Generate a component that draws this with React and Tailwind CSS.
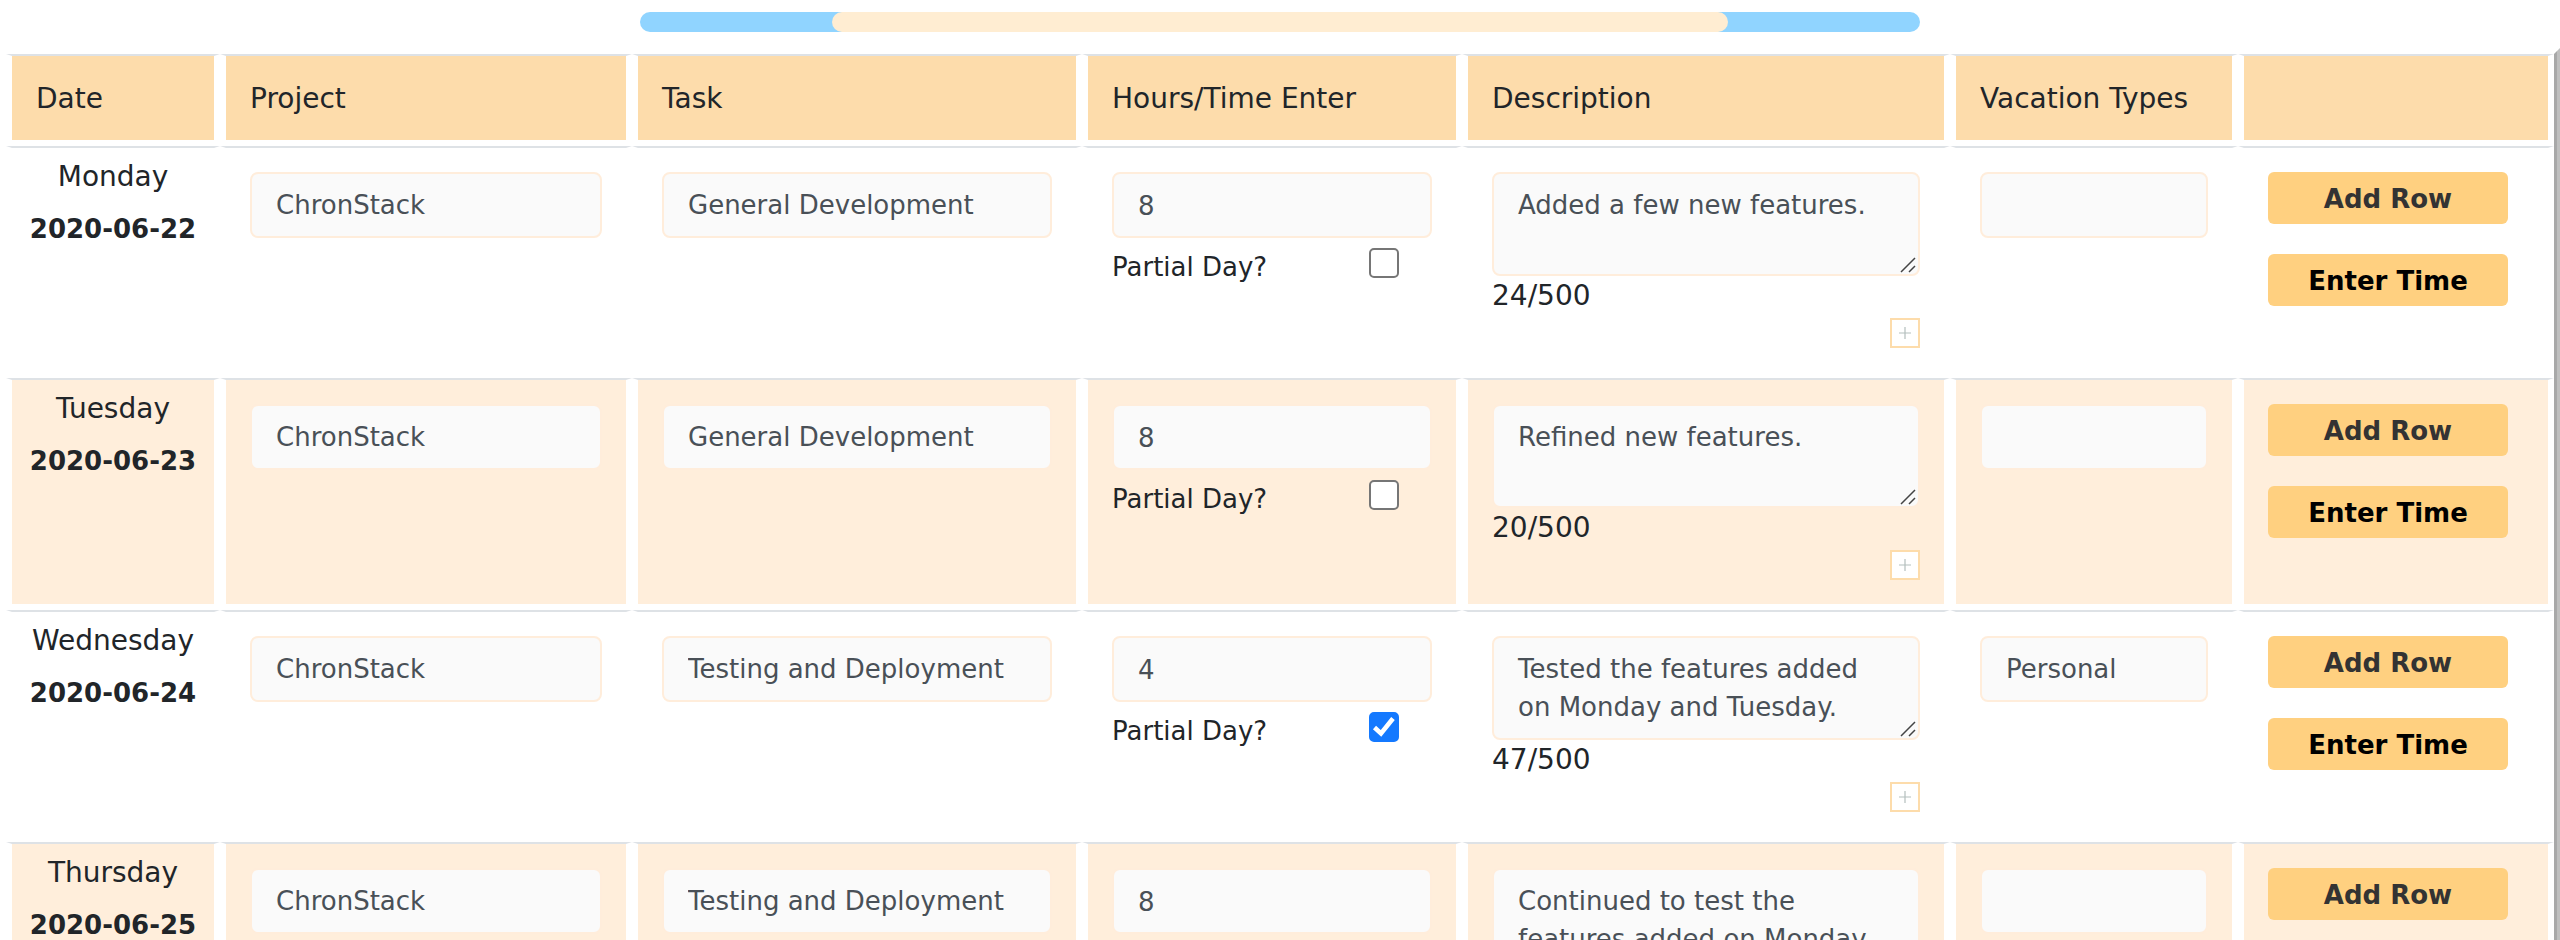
import { useState } from "react";

const ROWS = [
  { day: "Monday", date: "2020-06-22", project: "ChronStack", task: "General Development", hours: "8", partial: false, text: "Added a few new features.", count: 24, vacation: "" },
  { day: "Tuesday", date: "2020-06-23", project: "ChronStack", task: "General Development", hours: "8", partial: false, text: "Refined new features.", count: 20, vacation: "" },
  { day: "Wednesday", date: "2020-06-24", project: "ChronStack", task: "Testing and Deployment", hours: "4", partial: true, text: "Tested the features added on Monday and Tuesday.", count: 47, vacation: "Personal" },
  { day: "Thursday", date: "2020-06-25", project: "ChronStack", task: "Testing and Deployment", hours: "8", partial: false, text: "Continued to test the features added on Monday", count: 46, vacation: "" },
];

const HEADERS = ["Date", "Project", "Task", "Hours/Time Enter", "Description", "Vacation Types"];

const CELL = "border-x-6 border-b-6 border-t-2 border-x-white border-b-white border-t-[#dee2e6] align-top";
const FIELD = "block w-full rounded-lg border-2 border-[#ffeddb] bg-[#fafafa] px-6 text-[26px] text-[#495057] outline-none";

function TextField({ label, value }) {
  return <input type="text" aria-label={label} defaultValue={value} className={`${FIELD} h-[66px]`} />;
}

function PartialDay({ id, checked }) {
  return (
    <div className="flex items-start justify-between pt-2.5 pr-[33px]">
      <label htmlFor={id} className="text-[26px] leading-[38px]">Partial Day?</label>
      <span className="grid">
        <input
          id={id}
          type="checkbox"
          defaultChecked={checked}
          className="peer col-start-1 row-start-1 size-[30px] appearance-none rounded-[5px] border-2 border-[#767676] bg-white checked:border-[#1479ff] checked:bg-[#1479ff]"
        />
        <svg viewBox="0 0 30 30" className="pointer-events-none invisible col-start-1 row-start-1 size-[30px] peer-checked:visible" fill="none" stroke="#fff" strokeWidth="4.6">
          <path d="M5.5 15.5 L12 21.5 L24 6.5" />
        </svg>
      </span>
    </div>
  );
}

function Description({ label, value, count }) {
  const [text, setText] = useState(value);
  return (
    <div className="flex flex-col">
      <div className="relative">
        <textarea
          aria-label={label}
          value={text}
          onChange={(e) => setText(e.target.value)}
          className={`${FIELD} h-[104px] resize-none overflow-hidden py-3 leading-[38px]`}
        />
        <svg viewBox="0 0 16 16" className="pointer-events-none absolute right-1 bottom-[3px] size-4" stroke="#444" strokeWidth="1.5">
          <path d="M1 15 L15 1 M9 15 L15 9" />
        </svg>
      </div>
      <div className="pb-0.5 text-[28px] leading-10">{text === value ? count : text.length}/500</div>
      <button type="button" aria-label="Add description" className="flex h-[30px] w-[30px] items-center justify-center self-end border-2 border-[#fddcab] bg-white">
        <svg viewBox="0 0 12 12" className="size-3" stroke="#b4bfbd" strokeWidth="1.2">
          <path d="M0 6 H12 M6 0 V12" />
        </svg>
      </button>
    </div>
  );
}

export default function App() {
  return (
    <main className="h-screen overflow-hidden bg-white pt-3 font-['DejaVu_Sans',Verdana,sans-serif] text-[#212529]">
      <div role="progressbar" aria-label="Week progress" className="mx-auto flex h-5 w-1/2 justify-center rounded-[10px] bg-[#90d4ff]">
        <div className="h-5 w-7/10 rounded-[10px] bg-[#ffedd2]" />
      </div>
      <div className="mt-4 border-x-3 border-t-3 border-x-white border-t-white border-r-[#bfbfbf]">
        <div className="border-x-3 border-t-3 border-x-white border-t-white border-r-[#a8a8a8]">
          <table className="w-full table-fixed border-separate border-spacing-0">
            <colgroup>
              <col className="w-[214px]" />
              <col className="w-[412px]" />
              <col className="w-[450px]" />
              <col className="w-[380px]" />
              <col />
              <col className="w-[288px]" />
              <col className="w-[316px]" />
            </colgroup>
            <thead>
              <tr className="bg-[#fddcab]">
                {HEADERS.map((h) => (
                  <th key={h} scope="col" className={`${CELL} px-6 pt-[22px] pb-5 text-left text-[28px] leading-[42px] font-normal whitespace-nowrap`}>{h}</th>
                ))}
                <td className={CELL} />
              </tr>
            </thead>
            <tbody>
              {ROWS.map((r) => (
                <tr key={r.date} className="odd:bg-white even:bg-[#ffeedb]">
                  <td className={`${CELL} pt-2 text-center`}>
                    <div className="text-[28px] leading-[42px]">{r.day}</div>
                    <div className="pt-3 text-[26px] leading-[38px] font-bold">{r.date}</div>
                  </td>
                  <td className={`${CELL} p-6`}><TextField label={`${r.day} project`} value={r.project} /></td>
                  <td className={`${CELL} p-6`}><TextField label={`${r.day} task`} value={r.task} /></td>
                  <td className={`${CELL} p-6`}>
                    <input type="text" inputMode="numeric" aria-label={`${r.day} hours`} defaultValue={r.hours} className={`${FIELD} h-[66px] pt-0.5`} />
                    <PartialDay id={`partial-${r.date}`} checked={r.partial} />
                  </td>
                  <td className={`${CELL} p-6`}><Description label={`${r.day} description`} value={r.text} count={r.count} /></td>
                  <td className={`${CELL} p-6`}><TextField label={`${r.day} vacation type`} value={r.vacation} /></td>
                  <td className={`${CELL} p-6`}>
                    <div className="flex flex-col gap-[30px] pr-4 text-[26px] font-bold">
                      <button type="button" className="h-[52px] rounded-md bg-[#ffd080] pt-0.5 text-[#333]">Add Row</button>
                      <button type="button" className="h-[52px] rounded-md bg-[#ffd080] pt-0.5 text-black">Enter Time</button>
                    </div>
                  </td>
                </tr>
              ))}
            </tbody>
          </table>
        </div>
      </div>
    </main>
  );
}
